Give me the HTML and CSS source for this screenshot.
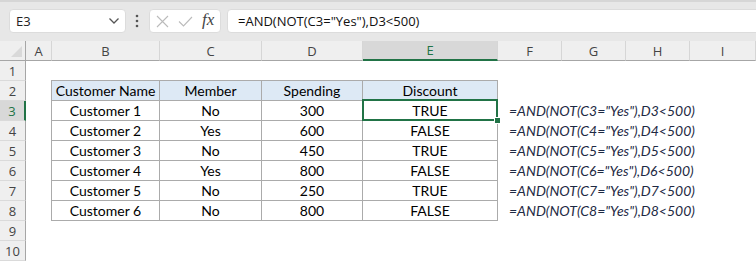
FILE: index.html
```html
<!DOCTYPE html>
<html lang="en">
<head>
    <meta charset="UTF-8">
    <title>AND NOT example</title>
    <link rel="stylesheet" href="styles.css">
</head>
<body>
    <div class="fbar">
        <div class="namebox">
            <span>E3</span>
            <svg class="chev" width="12" height="8" viewBox="0 0 12 8"><path d="M1.5 1.5 L6 6 L10.5 1.5" fill="none" stroke="#555" stroke-width="1.3"/></svg>
        </div>
        <svg class="dots" width="4" height="14" viewBox="0 0 4 14"><circle cx="2" cy="2" r="1.3" fill="#555"/><circle cx="2" cy="7" r="1.3" fill="#555"/><circle cx="2" cy="12" r="1.3" fill="#555"/></svg>
        <div class="fxbox">
            <svg width="13" height="13" viewBox="0 0 13 13"><path d="M1 1 L12 12 M12 1 L1 12" stroke="#bbb" stroke-width="1.1"/></svg>
            <svg width="15" height="11" viewBox="0 0 15 11"><path d="M1 5.5 L5.5 10 L14 1" fill="none" stroke="#bbb" stroke-width="1.1"/></svg>
            <span class="fx">fx</span>
        </div>
        <div class="formula">=AND(NOT(C3="Yes"),D3&lt;500)</div>
    </div>

    <div class="sheet">
        <div class="corner"></div>
        <div class="colhdr">A</div>
        <div class="colhdr">B</div>
        <div class="colhdr">C</div>
        <div class="colhdr">D</div>
        <div class="colhdr sel">E</div>
        <div class="colhdr">F</div>
        <div class="colhdr">G</div>
        <div class="colhdr">H</div>
        <div class="colhdr">I</div>

        <div class="rowhdr">1</div>
        <div class="rowhdr">2</div>
        <div class="rowhdr sel">3</div>
        <div class="rowhdr">4</div>
        <div class="rowhdr">5</div>
        <div class="rowhdr">6</div>
        <div class="rowhdr">7</div>
        <div class="rowhdr">8</div>
        <div class="rowhdr">9</div>
        <div class="rowhdr">10</div>

        <div class="tbl">
            <div class="th">Customer Name</div>
            <div class="th">Member</div>
            <div class="th">Spending</div>
            <div class="th">Discount</div>

            <div>Customer 1</div><div>No</div><div>300</div><div class="cur">TRUE</div>
            <div>Customer 2</div><div>Yes</div><div>600</div><div>FALSE</div>
            <div>Customer 3</div><div>No</div><div>450</div><div>TRUE</div>
            <div>Customer 4</div><div>Yes</div><div>800</div><div>FALSE</div>
            <div>Customer 5</div><div>No</div><div>250</div><div>TRUE</div>
            <div>Customer 6</div><div>No</div><div>800</div><div>FALSE</div>
        </div>

        <div class="notes">
            <div>=AND(NOT(C3="Yes"),D3&lt;500)</div>
            <div>=AND(NOT(C4="Yes"),D4&lt;500)</div>
            <div>=AND(NOT(C5="Yes"),D5&lt;500)</div>
            <div>=AND(NOT(C6="Yes"),D6&lt;500)</div>
            <div>=AND(NOT(C7="Yes"),D7&lt;500)</div>
            <div>=AND(NOT(C8="Yes"),D8&lt;500)</div>
        </div>
    </div>
</body>
</html>
```

FILE: styles.css
```css
body {
    margin: 0;
    width: 756px;
    height: 261px;
    overflow: hidden;
    background: #fff;
    font-family: 'Open Sans', sans-serif;
}

/* formula bar */
.fbar {
    height: 41px;
    box-sizing: border-box;
    background: #e7e7e7;
    border-top: 2px solid #d6d6d6;
    padding: 7px 0 0 9px;
    display: flex;
    align-items: flex-start;
}
.namebox, .fxbox, .formula {
    height: 24px;
    box-sizing: border-box;
    background: #fff;
    border: 1px solid #dcdcdc;
    border-radius: 4px;
    display: flex;
    align-items: center;
}
.namebox {
    width: 117px;
    padding: 0 5px 0 6px;
    justify-content: space-between;
    font-size: 13px;
    color: #222;
}
.dots {
    margin: 5px 10px 0 9px;
}
.fxbox {
    width: 72px;
    padding: 0 5px 0 6px;
    gap: 9px;
}
.fx {
    font-family: 'Liberation Serif', serif;
    font-style: italic;
    font-size: 17px;
    color: #444;
    margin-top: -3px;
}
.formula {
    flex: 1;
    margin-left: 6px;
    margin-right: -10px;
    padding-left: 10px;
    font-size: 13px;
    color: #111;
}

/* sheet grid */
.sheet {
    display: grid;
    grid-template-columns: 26px 26px 108px 102px 101px 135px 64px 64px 64px 1fr;
    grid-template-rows: repeat(11, 20px);
    font-size: 13px;
    color: #444;
}
.corner, .colhdr, .rowhdr {
    background: #efefef;
    box-sizing: border-box;
    display: flex;
    align-items: center;
    justify-content: center;
}
.corner {
    border-right: 1px solid #a6a6a6;
    border-bottom: 1px solid #a6a6a6;
    position: relative;
}
.corner::after {
    content: "";
    position: absolute;
    right: 3px;
    bottom: 3px;
    border-style: solid;
    border-width: 0 0 11px 11px;
    border-color: transparent transparent #d9d9d9 transparent;
}
.colhdr {
    border-right: 1px solid #d6d6d6;
    border-bottom: 1px solid #a6a6a6;
}
.colhdr.sel {
    background: #d8d8d8;
    color: #217346;
    border-bottom: 2px solid #217346;
}
.rowhdr {
    grid-column: 1;
    border-right: 1px solid #a6a6a6;
    border-bottom: 1px solid #dadada;
}
.rowhdr.sel {
    background: #d8d8d8;
    color: #217346;
    border-right: 2px solid #217346;
}

/* data table */
.tbl {
    grid-column: 3 / 7;
    grid-row: 3 / 10;
    margin: -1px 0 0 -1px;
    display: grid;
    grid-template-columns: 108px 102px 101px 1fr;
    grid-auto-rows: 20px;
    border-top: 1px solid #ababab;
    border-left: 1px solid #ababab;
    font-family: 'Lato', sans-serif;
    font-size: 14px;
    color: #000;
}
.tbl > div {
    box-sizing: border-box;
    border-right: 1px solid #ababab;
    border-bottom: 1px solid #ababab;
    display: flex;
    align-items: center;
    justify-content: center;
}
.tbl .th {
    background: #dde9f5;
}
.tbl .cur {
    position: relative;
}
.tbl .cur::before {
    content: "";
    position: absolute;
    top: -2px;
    left: -1px;
    right: -1px;
    bottom: -1px;
    border: 2px solid #217346;
}
.tbl .cur::after {
    content: "";
    position: absolute;
    right: -4px;
    bottom: -4px;
    width: 5px;
    height: 5px;
    background: #217346;
    border: 1px solid #fff;
}

.notes {
    grid-column: 7 / -1;
    grid-row: 4 / 10;
    padding-left: 11px;
    font-family: 'Lato', sans-serif;
    font-style: italic;
    font-size: 14px;
    color: #1e2a44;
}
.notes div {
    height: 20px;
    line-height: 20px;
}
```
